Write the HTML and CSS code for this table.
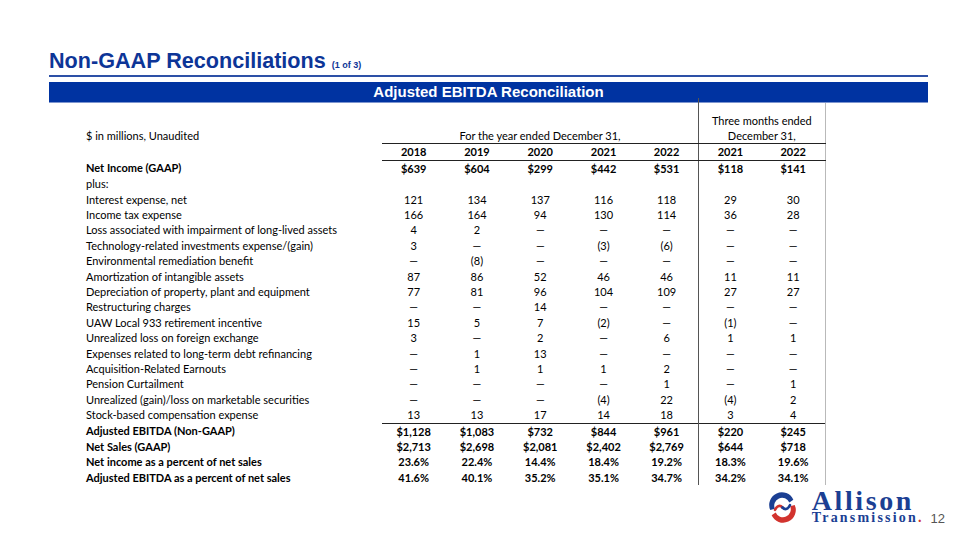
FILE: index.html
```html
<!DOCTYPE html>
<html>
<head>
<meta charset="utf-8">
<link rel="stylesheet" href="styles.css">
</head>
<body>
<div class="slide">
  <h1 class="title">Non-GAAP Reconciliations <span class="sub">(1 of 3)</span></h1>
  <div class="rule"></div>
  <div class="banner">Adjusted EBITDA Reconciliation</div>

  <table class="recon">
    <colgroup>
      <col class="c-label">
      <col class="c-val"><col class="c-val"><col class="c-val"><col class="c-val"><col class="c-val">
      <col class="c-val"><col class="c-val">
    </colgroup>
    <thead>
      <tr class="h1row">
        <th class="lbl"></th>
        <th colspan="5"></th>
        <th colspan="2" class="q first-q top-q">Three months ended</th>
      </tr>
      <tr class="h2row">
        <th class="lbl">$ in millions, Unaudited</th>
        <th colspan="5" class="ul">For the year ended December 31,</th>
        <th colspan="2" class="q first-q ul">December 31,</th>
      </tr>
      <tr class="yrow">
        <th class="lbl"></th>
        <th class="ul">2018</th><th class="ul">2019</th><th class="ul">2020</th><th class="ul">2021</th><th class="ul">2022</th>
        <th class="ul first-q">2021</th><th class="ul last-q">2022</th>
      </tr>
    </thead>
    <tbody>
      <tr class="b"><td class="lbl">Net Income (GAAP)</td><td>$639</td><td>$604</td><td>$299</td><td>$442</td><td>$531</td><td class="first-q">$118</td><td class="last-q">$141</td></tr>
      <tr><td class="lbl">plus:</td><td></td><td></td><td></td><td></td><td></td><td class="first-q"></td><td class="last-q"></td></tr>
      <tr><td class="lbl">Interest expense, net</td><td>121</td><td>134</td><td>137</td><td>116</td><td>118</td><td class="first-q">29</td><td class="last-q">30</td></tr>
      <tr><td class="lbl">Income tax expense</td><td>166</td><td>164</td><td>94</td><td>130</td><td>114</td><td class="first-q">36</td><td class="last-q">28</td></tr>
      <tr><td class="lbl">Loss associated with impairment of long-lived assets</td><td>4</td><td>2</td><td>—</td><td>—</td><td>—</td><td class="first-q">—</td><td class="last-q">—</td></tr>
      <tr><td class="lbl">Technology-related investments expense/(gain)</td><td>3</td><td>—</td><td>—</td><td>(3)</td><td>(6)</td><td class="first-q">—</td><td class="last-q">—</td></tr>
      <tr><td class="lbl">Environmental remediation benefit</td><td>—</td><td>(8)</td><td>—</td><td>—</td><td>—</td><td class="first-q">—</td><td class="last-q">—</td></tr>
      <tr><td class="lbl">Amortization of intangible assets</td><td>87</td><td>86</td><td>52</td><td>46</td><td>46</td><td class="first-q">11</td><td class="last-q">11</td></tr>
      <tr><td class="lbl">Depreciation of property, plant and equipment</td><td>77</td><td>81</td><td>96</td><td>104</td><td>109</td><td class="first-q">27</td><td class="last-q">27</td></tr>
      <tr><td class="lbl">Restructuring charges</td><td>—</td><td>—</td><td>14</td><td>—</td><td>—</td><td class="first-q">—</td><td class="last-q">—</td></tr>
      <tr><td class="lbl">UAW Local 933 retirement incentive</td><td>15</td><td>5</td><td>7</td><td>(2)</td><td>—</td><td class="first-q">(1)</td><td class="last-q">—</td></tr>
      <tr><td class="lbl">Unrealized loss on foreign exchange</td><td>3</td><td>—</td><td>2</td><td>—</td><td>6</td><td class="first-q">1</td><td class="last-q">1</td></tr>
      <tr><td class="lbl">Expenses related to long-term debt refinancing</td><td>—</td><td>1</td><td>13</td><td>—</td><td>—</td><td class="first-q">—</td><td class="last-q">—</td></tr>
      <tr><td class="lbl">Acquisition-Related Earnouts</td><td>—</td><td>1</td><td>1</td><td>1</td><td>2</td><td class="first-q">—</td><td class="last-q">—</td></tr>
      <tr><td class="lbl">Pension Curtailment</td><td>—</td><td>—</td><td>—</td><td>—</td><td>1</td><td class="first-q">—</td><td class="last-q">1</td></tr>
      <tr><td class="lbl">Unrealized (gain)/loss on marketable securities</td><td>—</td><td>—</td><td>—</td><td>(4)</td><td>22</td><td class="first-q">(4)</td><td class="last-q">2</td></tr>
      <tr><td class="lbl">Stock-based compensation expense</td><td>13</td><td>13</td><td>17</td><td>14</td><td>18</td><td class="first-q">3</td><td class="last-q">4</td></tr>
      <tr class="b total"><td class="lbl">Adjusted EBITDA (Non-GAAP)</td><td>$1,128</td><td>$1,083</td><td>$732</td><td>$844</td><td>$961</td><td class="first-q">$220</td><td class="last-q">$245</td></tr>
      <tr class="b"><td class="lbl">Net Sales (GAAP)</td><td>$2,713</td><td>$2,698</td><td>$2,081</td><td>$2,402</td><td>$2,769</td><td class="first-q">$644</td><td class="last-q">$718</td></tr>
      <tr class="b"><td class="lbl">Net income as a percent of net sales</td><td>23.6%</td><td>22.4%</td><td>14.4%</td><td>18.4%</td><td>19.2%</td><td class="first-q">18.3%</td><td class="last-q">19.6%</td></tr>
      <tr class="b"><td class="lbl">Adjusted EBITDA as a percent of net sales</td><td>41.6%</td><td>40.1%</td><td>35.2%</td><td>35.1%</td><td>34.7%</td><td class="first-q">34.2%</td><td class="last-q">34.1%</td></tr>
    </tbody>
  </table>

  <footer class="footer">
    <div class="logo">
      <svg class="emblem" viewBox="0 0 30 30" width="31" height="31">
        <path d="M3.2 17.5 A12 12 0 0 1 25.5 7.5 L21.6 10.2 A7.6 7.6 0 0 0 7.6 16.2 Z" fill="#1b3f93"/>
        <path d="M26.8 12.5 A12 12 0 0 1 4.5 22.5 L8.4 19.8 A7.6 7.6 0 0 0 22.4 13.8 Z" fill="#d2332e"/>
        <path d="M7.8 17.2 C10 12.6 13 12.8 15 15" fill="none" stroke="#d2332e" stroke-width="2.6" stroke-linecap="round"/>
        <path d="M15 15 C17 17.2 20 17.4 22.2 12.8" fill="none" stroke="#1b3f93" stroke-width="2.6" stroke-linecap="round"/>
      </svg>
      <div class="wordmark">
        <span class="allison">Allison</span>
        <div class="tline"><span class="transmission">Transmission</span><span class="dot">.</span></div>
      </div>
    </div>
    <span class="pagenum">12</span>
  </footer>
</div>
</body>
</html>
```

FILE: styles.css
```css
html, body {
  margin: 0;
  padding: 0;
  background: #ffffff;
}

.slide {
  width: 960px;
  height: 540px;
  box-sizing: border-box;
  padding: 48px 32px 0 49px;
  overflow: hidden;
}

.title {
  margin: 0;
  height: 26px;
  font-family: "Liberation Sans", Arial, sans-serif;
  font-weight: bold;
  font-size: 21.6px;
  line-height: 26px;
  color: #0d3597;
  white-space: nowrap;
}

.title .sub {
  font-size: 9px;
  line-height: 0;
  letter-spacing: 0;
}

.rule {
  margin-top: 1px;
  height: 1.5px;
  background: #2d50a6;
}

.banner {
  margin-top: 5.5px;
  height: 20px;
  line-height: 20px;
  background: #0033a1;
  border-bottom: 1px solid #7d95cf;
  color: #ffffff;
  text-align: center;
  font-family: "Liberation Sans", Arial, sans-serif;
  font-weight: bold;
  font-size: 15px;
}

.recon {
  margin-left: 37px;
  border-collapse: collapse;
  table-layout: fixed;
  width: 739px;
  font-family: Lato, "Liberation Sans", sans-serif;
  font-size: 11px;
  color: #000000;
}

.recon col.c-label { width: 296px; }
.recon col.c-val { width: 63.3px; }

.recon th,
.recon td {
  padding: 0;
  height: 15.4px;
  line-height: 15.4px;
  text-align: center;
  white-space: nowrap;
  font-weight: normal;
}

.recon .lbl {
  text-align: left;
}

.recon .h1row th {
  padding-top: 9.5px;
  vertical-align: bottom;
}

.recon .yrow th {
  font-weight: bold;
}

.recon .ul {
  border-bottom: 1px solid #222;
}

.recon .first-q {
  border-left: 1.5px solid #555;
}

.recon .q,
.recon .last-q {
  border-right: 1px solid #b9b9b9;
}

.recon .top-q {
  position: relative;
}

.recon .top-q::before {
  content: "";
  position: absolute;
  left: -1.5px;
  top: -5px;
  height: 5px;
  border-left: 1.5px solid #555;
}

.recon tr.b td {
  font-weight: bold;
}

.recon tr.total td:not(.lbl) {
  border-top: 1px solid #222;
}

.footer {
  margin-top: 5px;
  margin-right: -17px;
  display: flex;
  justify-content: flex-end;
  align-items: flex-end;
  gap: 9px;
}

.logo {
  display: flex;
  align-items: center;
  gap: 14px;
}

.emblem {
  display: block;
}

.wordmark {
  display: flex;
  flex-direction: column;
  font-family: "Liberation Serif", "Times New Roman", serif;
  font-weight: bold;
  color: #1b3f93;
}

.allison {
  font-size: 28px;
  line-height: 21px;
  letter-spacing: 2.6px;
}

.tline {
  display: flex;
  align-items: baseline;
}

.transmission {
  font-size: 14px;
  line-height: 13px;
  letter-spacing: 2.2px;
}

.dot {
  font-size: 14px;
  line-height: 13px;
  color: #d2332e;
}

.pagenum {
  font-family: "Liberation Sans", Arial, sans-serif;
  font-size: 13px;
  line-height: 16px;
  color: #555555;
  margin-bottom: -3px;
}
```
